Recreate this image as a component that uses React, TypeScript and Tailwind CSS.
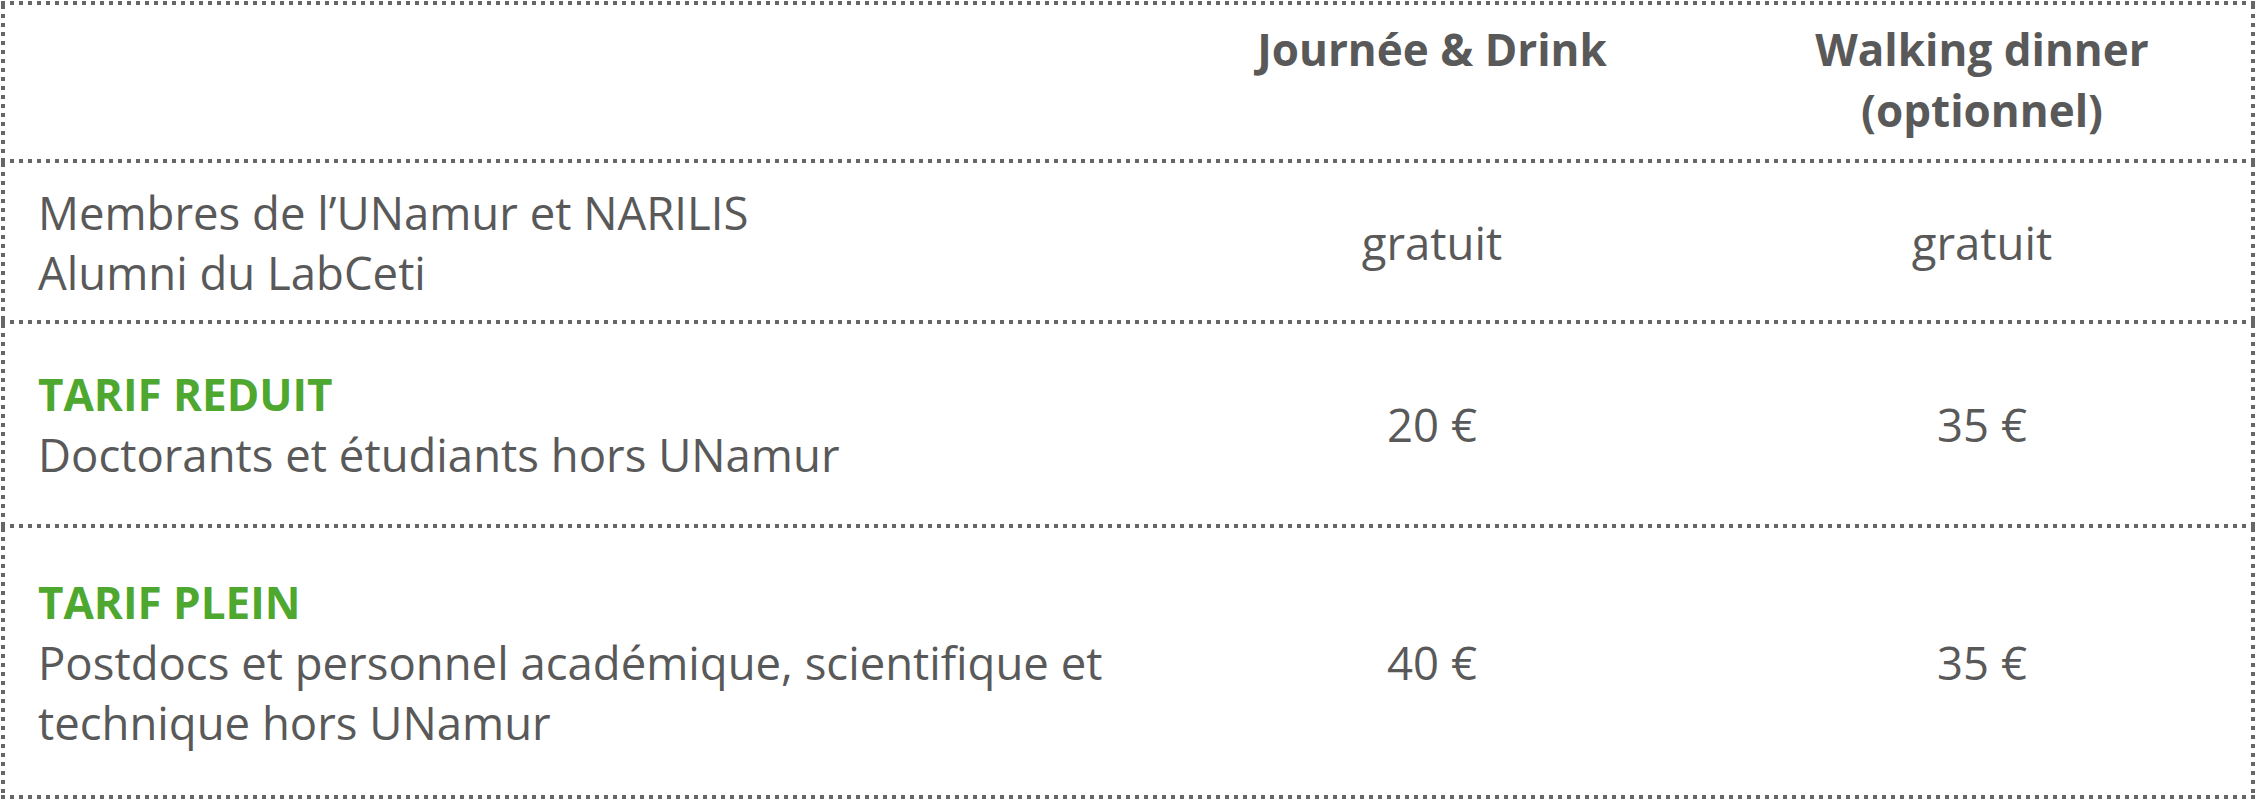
import React from "react";

const HLine = () => (
  <div className="h-[4px] w-full bg-[repeating-linear-gradient(to_right,#666666_0px,#666666_4px,transparent_4px,transparent_9px)]" />
);

const VLine = () => (
  <div className="w-[4px] shrink-0 self-stretch bg-[repeating-linear-gradient(to_bottom,#666666_0px,#666666_4px,transparent_4px,transparent_9px)]" />
);

type RowProps = { h: string; children: React.ReactNode };

const Row = ({ h, children }: RowProps) => (
  <div className={`flex ${h}`}>
    <VLine />
    <div className="grid flex-1 grid-cols-[1146px_562px_538px]">{children}</div>
    <VLine />
  </div>
);

const Label = ({ children }: { children: React.ReactNode }) => (
  <div className="flex flex-col justify-center pl-[33px]">{children}</div>
);

const Price = ({ children }: { children: React.ReactNode }) => (
  <div className="flex items-center justify-center">{children}</div>
);

const Green = ({ children }: { children: React.ReactNode }) => (
  <div className="text-[44px] font-bold text-[#4ea72e]">{children}</div>
);

export default function App() {
  return (
    <div
      className="min-h-screen bg-white pl-px pt-px text-[45.5px] leading-[60px] text-[#595959]"
      style={{ fontFamily: '"Open Sans", "Noto Sans", sans-serif' }}
    >
      <div className="flex w-[2254px] flex-col">
        <HLine />
        <div className="flex h-[154px]">
          <VLine />
          <div className="grid flex-1 grid-cols-[1146px_562px_538px] text-[44px] font-bold leading-[61px]">
            <div />
            <div className="pt-[14px] text-center">Journée &amp; Drink</div>
            <div className="pt-[14px] text-center">
              Walking dinner
              <br />
              (optionnel)
            </div>
          </div>
          <VLine />
        </div>
        <HLine />
        <Row h="h-[157px]">
          <Label>
            <div>Membres de l’UNamur et NARILIS</div>
            <div>Alumni du LabCeti</div>
          </Label>
          <Price>gratuit</Price>
          <Price>gratuit</Price>
        </Row>
        <HLine />
        <Row h="h-[200px]">
          <Label>
            <Green>TARIF REDUIT</Green>
            <div>Doctorants et étudiants hors UNamur</div>
          </Label>
          <Price>20 €</Price>
          <Price>35 €</Price>
        </Row>
        <HLine />
        <Row h="h-[267px]">
          <Label>
            <Green>TARIF PLEIN</Green>
            <div>
              Postdocs et personnel académique, scientifique et
              <br />
              technique hors UNamur
            </div>
          </Label>
          <Price>40 €</Price>
          <Price>35 €</Price>
        </Row>
        <HLine />
      </div>
    </div>
  );
}
